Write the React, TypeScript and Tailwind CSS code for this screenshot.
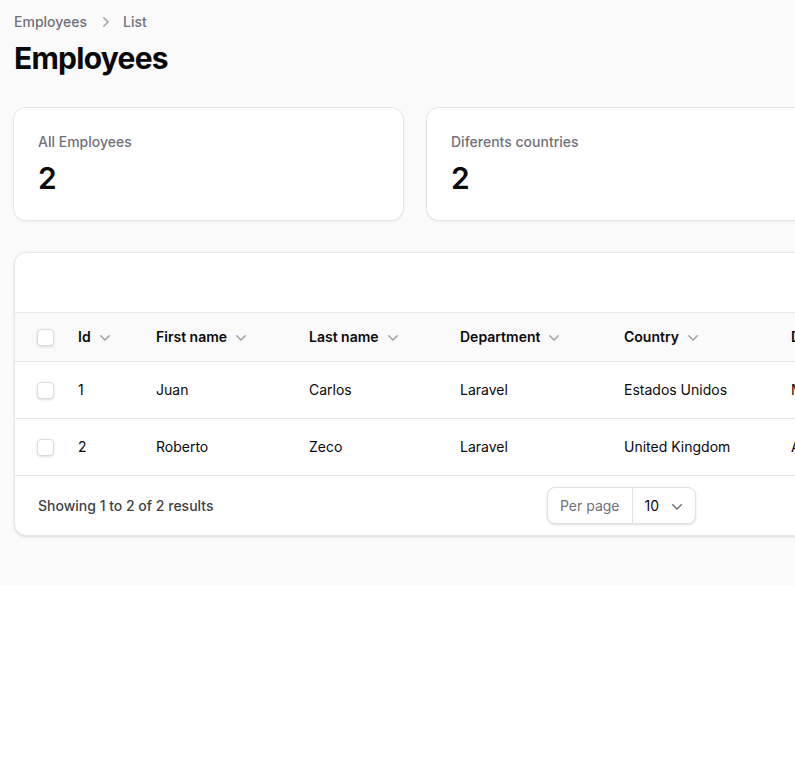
import React from 'react';

const columns = [
  { label: 'Id', width: 'w-[78px]' },
  { label: 'First name', width: 'w-[153px]' },
  { label: 'Last name', width: 'w-[151px]' },
  { label: 'Department', width: 'w-[164px]' },
  { label: 'Country', width: 'w-[167px]' },
  { label: 'Date of birth', width: 'w-[180px]' },
];

const employees = [
  ['1', 'Juan', 'Carlos', 'Laravel', 'Estados Unidos', 'Mar 14, 1990'],
  ['2', 'Roberto', 'Zeco', 'Laravel', 'United Kingdom', 'Apr 2, 1988'],
];

function ChevronDown({ className }: { className?: string }) {
  return (
    <svg viewBox="0 0 20 20" fill="currentColor" className={className} aria-hidden="true">
      <path
        fillRule="evenodd"
        d="M5.22 8.22a.75.75 0 0 1 1.06 0L10 11.94l3.72-3.72a.75.75 0 1 1 1.06 1.06l-4.25 4.25a.75.75 0 0 1-1.06 0L5.22 9.28a.75.75 0 0 1 0-1.06Z"
        clipRule="evenodd"
      />
    </svg>
  );
}

function ChevronRight({ className }: { className?: string }) {
  return (
    <svg viewBox="0 0 20 20" fill="currentColor" className={className} aria-hidden="true">
      <path
        fillRule="evenodd"
        d="M8.22 5.22a.75.75 0 0 1 1.06 0l4.25 4.25a.75.75 0 0 1 0 1.06l-4.25 4.25a.75.75 0 0 1-1.06-1.06L11.94 10 8.22 6.28a.75.75 0 0 1 0-1.06Z"
        clipRule="evenodd"
      />
    </svg>
  );
}

function Checkbox() {
  return <span className="block size-[17px] rounded-[4px] border border-[#dcdcdc] bg-white shadow-sm" />;
}

function StatCard({ label, value }: { label: string; value: string }) {
  return (
    <div className="rounded-xl bg-white px-6 py-6 shadow-sm ring-1 ring-[#e7e7e7]">
      <p className="text-sm leading-5 font-medium text-[#71717a]">{label}</p>
      <p className="mt-2 text-3xl leading-9 font-semibold text-[#09090b]">{value}</p>
    </div>
  );
}

export default function App() {
  return (
    <div className="w-full overflow-hidden bg-white font-['Inter',sans-serif]">
      <div className="w-[1243px] bg-[#fafafa] px-[14px] pt-3 pb-[49px]">
        <nav className="flex h-5 items-center gap-2 text-sm font-medium text-[#71717a]">
          <span>Employees</span>
          <ChevronRight className="size-5 text-[#a1a1aa]" />
          <span>List</span>
        </nav>
        <h1 className="mt-2 text-3xl leading-9 font-bold tracking-tight text-[#09090b]">Employees</h1>

        <div className="mt-8 grid grid-cols-3 gap-6">
          <StatCard label="All Employees" value="2" />
          <StatCard label="Diferents countries" value="2" />
          <StatCard label="Departments" value="1" />
        </div>

        <div className="mt-8 overflow-hidden rounded-xl border border-[#e7e7e7] bg-white shadow-sm">
          <div className="h-[60px] border-b border-[#e7e7e7]" />

          <div className="flex h-[49px] items-center border-b border-[#e7e7e7] bg-[#fafafa]">
            <div className="w-[51px] pl-[22px]">
              <Checkbox />
            </div>
            {columns.map((col) => (
              <div key={col.label} className={`${col.width} flex items-center gap-1 px-3`}>
                <span className="text-sm font-semibold text-[#09090b]">{col.label}</span>
                <ChevronDown className="size-5 text-[#a1a1aa]" />
              </div>
            ))}
          </div>

          {employees.map((row) => (
            <div key={row[0]} className="flex h-[57px] items-center border-b border-[#e7e7e7]">
              <div className="w-[51px] pl-[22px]">
                <Checkbox />
              </div>
              {row.map((cell, i) => (
                <div key={i} className={`${columns[i].width} px-3 text-sm text-[#09090b]`}>
                  {cell}
                </div>
              ))}
            </div>
          ))}

          <div className="grid h-[59px] grid-cols-3 items-center px-[23px]">
            <p className="text-sm font-medium text-[#3f3f46]">Showing 1 to 2 of 2 results</p>
            <div className="flex h-[37px] items-center justify-self-center rounded-lg border border-[#e2e2e2] bg-white shadow-sm">
              <span className="px-3 text-sm text-[#71717a]">Per page</span>
              <div className="flex h-full items-center gap-2 border-l border-[#e2e2e2] pr-2 pl-3">
                <span className="text-sm text-[#09090b]">10</span>
                <ChevronDown className="size-5 text-[#71717a]" />
              </div>
            </div>
            <div />
          </div>
        </div>
      </div>
    </div>
  );
}
